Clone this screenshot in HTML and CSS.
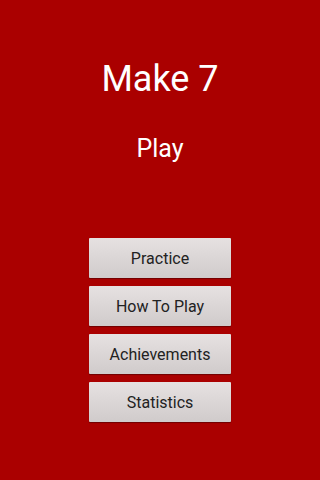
FILE: index.html
```html
<!DOCTYPE html>
<html>
<head>
<meta charset="utf-8">
<link rel="stylesheet" href="styles.css">
</head>
<body>
<div class="screen">
  <h1 class="title">Make 7</h1>
  <div class="subtitle">Play</div>
  <div class="menu">
    <button class="btn">Practice</button>
    <button class="btn">How To Play</button>
    <button class="btn">Achievements</button>
    <button class="btn">Statistics</button>
  </div>
</div>
</body>
</html>
```
FILE: styles.css
```css
html, body {
  margin: 0;
  padding: 0;
  background: #aa0000;
}
.screen {
  width: 320px;
  height: 480px;
  display: flex;
  flex-direction: column;
  align-items: center;
  font-family: Roboto, "Noto Sans", sans-serif;
}
.title {
  margin: 58px 0 0 0;
  font-size: 36px;
  font-weight: normal;
  line-height: 42px;
  color: #fff;
}
.subtitle {
  margin-top: 34px;
  font-size: 25px;
  line-height: 30px;
  color: #fff;
}
.menu {
  margin-top: 74px;
  display: flex;
  flex-direction: column;
  gap: 8px;
}
.btn {
  width: 142px;
  height: 40px;
  border: none;
  border-radius: 1px;
  background: linear-gradient(#e6e1e1, #d0cbcb);
  box-shadow: 0 1px 1px rgba(0,0,0,0.35);
  font-family: Roboto, "Noto Sans", sans-serif;
  font-size: 16px;
  color: #222;
  padding: 0;
}
```
